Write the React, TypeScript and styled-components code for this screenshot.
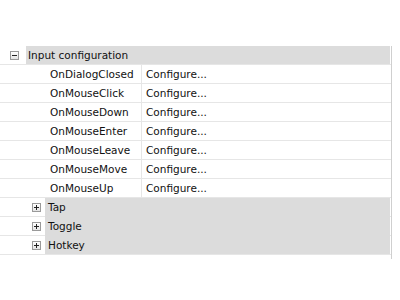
import React from "react";
import styled, { createGlobalStyle } from "styled-components";

const Global = createGlobalStyle`
  html, body { margin: 0; padding: 0; background: #ffffff; }
  body { font-family: "DejaVu Sans", Tahoma, sans-serif; }
`;

const Page = styled.div`
  width: 400px;
  height: 300px;
  padding-top: 46px;
  box-sizing: border-box;
`;

const Grid = styled.div`
  width: 392px;
  border-right: 1px solid #cfcfcf;
  box-sizing: border-box;
  padding-bottom: 4px;
`;

const Row = styled.div`
  display: flex;
  height: 19px;
  box-sizing: border-box;
  border-bottom: 1px solid #e6e6e6;
  font-size: 10.5px;
  color: #111111;
  line-height: 18px;
`;

const Indent = styled.div<{ $w: number; $pad: number }>`
  width: ${(p) => p.$w}px;
  flex: none;
  display: flex;
  align-items: center;
  padding-left: ${(p) => p.$pad}px;
  box-sizing: border-box;
`;

const Toggle = styled.span`
  position: relative;
  width: 9px;
  height: 9px;
  box-sizing: border-box;
  border: 1px solid #9a9a9a;
  background: linear-gradient(#ffffff, #e4e4e4);
  &::before {
    content: "";
    position: absolute;
    left: 1px;
    top: 3px;
    width: 5px;
    height: 1px;
    background: #222;
  }
`;

const PlusToggle = styled(Toggle)`
  &::after {
    content: "";
    position: absolute;
    left: 3px;
    top: 1px;
    width: 1px;
    height: 5px;
    background: #222;
  }
`;

const GroupCell = styled.div<{ $pad: number; $joined?: boolean }>`
  flex: 1;
  margin-right: 1px;
  background: #dcdcdc;
  padding-left: ${(p) => p.$pad}px;
  white-space: nowrap;
  box-shadow: ${(p) => (p.$joined ? "0 1px 0 #dcdcdc" : "none")};
`;

const NameCell = styled.div`
  width: 92px;
  flex: none;
  border-right: 1px solid #e6e6e6;
  box-sizing: border-box;
  white-space: nowrap;
`;

const ValueCell = styled.div`
  flex: 1;
  padding-left: 4px;
  white-space: nowrap;
`;

const events = [
  "OnDialogClosed",
  "OnMouseClick",
  "OnMouseDown",
  "OnMouseEnter",
  "OnMouseLeave",
  "OnMouseMove",
  "OnMouseUp",
];

const groups = ["Tap", "Toggle", "Hotkey"];

export default function App() {
  return (
    <>
      <Global />
      <Page>
        <Grid>
          <Row>
            <Indent $w={26} $pad={10}>
              <Toggle />
            </Indent>
            <GroupCell $pad={2}>Input configuration</GroupCell>
          </Row>
          {events.map((e) => (
            <Row key={e}>
              <Indent $w={50} $pad={0} />
              <NameCell>{e}</NameCell>
              <ValueCell>Configure...</ValueCell>
            </Row>
          ))}
          {groups.map((g, i) => (
            <Row key={g}>
              <Indent $w={45} $pad={32}>
                <PlusToggle />
              </Indent>
              <GroupCell $pad={3} $joined={i < groups.length - 1}>
                {g}
              </GroupCell>
            </Row>
          ))}
        </Grid>
      </Page>
    </>
  );
}
